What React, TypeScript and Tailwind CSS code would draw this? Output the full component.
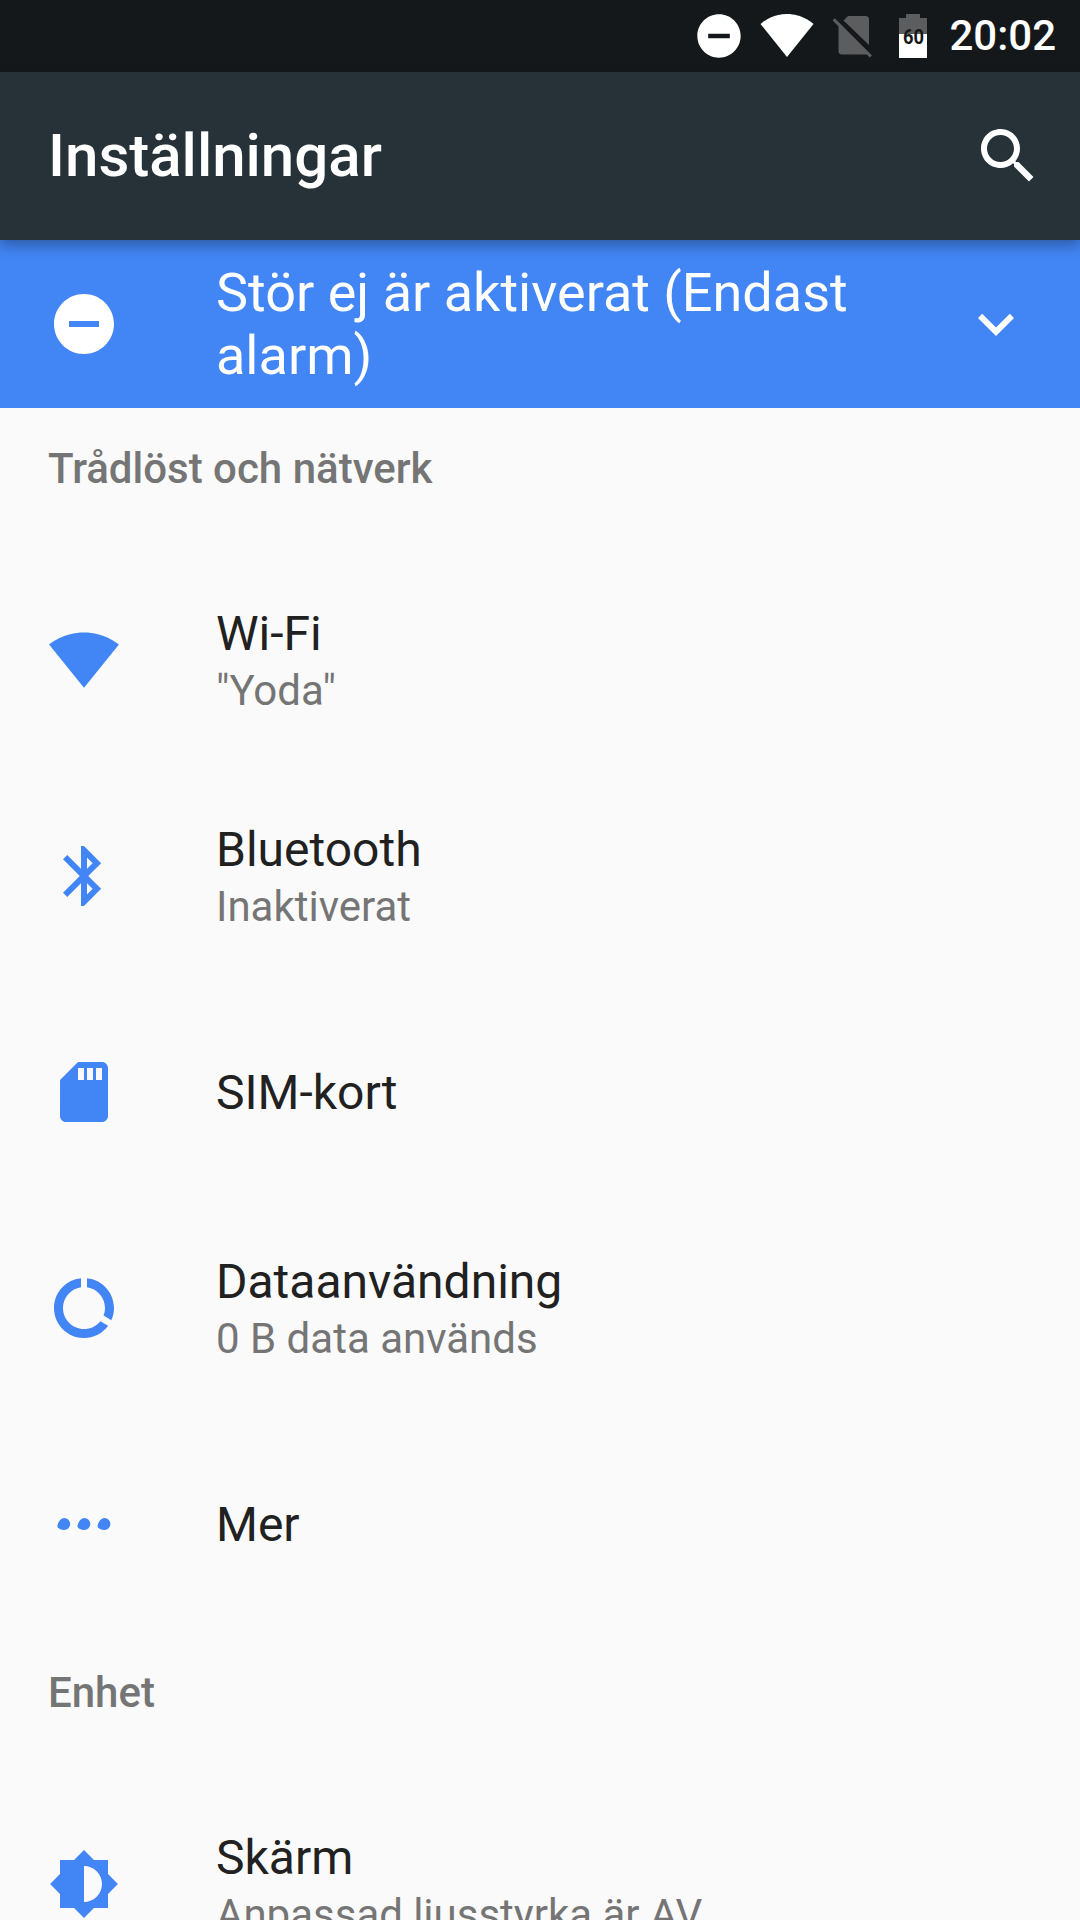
import type { ReactNode } from "react";

interface IconProps {
  className?: string;
  children: ReactNode;
}

function Icon({ className = "text-[#4285f4]", children }: IconProps) {
  return (
    <svg viewBox="0 0 24 24" className={`h-[72px] w-[72px] shrink-0 ${className}`} fill="currentColor">
      {children}
    </svg>
  );
}

const icons = {
  dnd: <path d="M12 2C6.48 2 2 6.48 2 12s4.48 10 10 10 10-4.48 10-10S17.52 2 12 2zm5 11H7v-2h10v2z" />,
  wifi: <path d="M12.01 21.29L23.64 6.8c-.45-.34-4.93-4-11.64-4C5.28 2.8.81 6.46.36 6.8l11.63 14.49.01.01z" />,
  bluetooth: (
    <path d="M17.71 7.71L12 2h-1v7.59L6.41 5 5 6.41 10.59 12 5 17.59 6.41 19 11 14.41V22h1l5.71-5.71-4.3-4.29 4.3-4.29zM13 5.83l1.88 1.88L13 9.59V5.83zm1.88 10.46L13 18.17v-3.76l1.88 1.88z" />
  ),
  sim: (
    <path d="M18 2h-8L4.02 8 4 20c0 1.1.9 2 2 2h12c1.1 0 2-.9 2-2V4c0-1.1-.9-2-2-2zm-6 6h-2V4h2v4zm3 0h-2V4h2v4zm3 0h-2V4h2v4z" />
  ),
  data: (
    <path d="M13 2.05v3.03c3.39.49 6 3.39 6 6.92 0 .9-.18 1.75-.48 2.54l2.6 1.53c.56-1.24.88-2.62.88-4.07 0-5.18-3.95-9.45-9-9.95zM12 19c-3.87 0-7-3.13-7-7 0-3.53 2.61-6.43 6-6.92V2.05c-5.06.5-9 4.76-9 9.95 0 5.52 4.47 10 9.99 10 3.31 0 6.24-1.61 8.06-4.09l-2.6-1.53C16.17 17.98 14.21 19 12 19z" />
  ),
  more: (
    <path d="M3.1 12.9c.2-1.5 1.1-2.9 2.3-2.9a2 2 0 1 1 0 4c-1.1 0-2-.5-2.3-1.1zm6.7 0c.2-1.5 1.1-2.9 2.3-2.9a2 2 0 1 1 0 4c-1.1 0-2-.5-2.3-1.1zm6.7 0c.2-1.5 1.1-2.9 2.3-2.9a2 2 0 1 1 0 4c-1.1 0-2-.5-2.3-1.1z" />
  ),
  display: (
    <path d="M20 15.31L23.31 12 20 8.69V4h-4.69L12 .69 8.69 4H4v4.69L.69 12 4 15.31V20h4.69L12 23.31 15.31 20H20v-4.69zM12 18V6c3.31 0 6 2.69 6 6s-2.69 6-6 6z" />
  ),
};

interface Setting {
  title: string;
  summary?: string;
  icon: ReactNode;
}

const network: Setting[] = [
  { title: "Wi-Fi", summary: '"Yoda"', icon: icons.wifi },
  { title: "Bluetooth", summary: "Inaktiverat", icon: icons.bluetooth },
  { title: "SIM-kort", icon: icons.sim },
  { title: "Dataanvändning", summary: "0 B data används", icon: icons.data },
  { title: "Mer", icon: icons.more },
];

const device: Setting[] = [
  { title: "Skärm", summary: "Anpassad ljusstyrka är AV", icon: icons.display },
];

function StatusBar() {
  return (
    <div className="flex h-[72px] items-center justify-end bg-[#14181b] pr-6 text-white">
      <svg viewBox="0 0 24 24" className="h-[52px] w-[52px]" fill="currentColor">
        {icons.dnd}
      </svg>
      <svg viewBox="0 0 54 44" className="ml-[15px] h-[44px] w-[54px]" fill="currentColor">
        <path d="M27 43L53.5 10C52.5 9 42.5 0 27 0S1.500 9 .5 10z" />
      </svg>
      <svg viewBox="0 0 40 44" className="ml-[18px] h-[44px] w-[40px]" fill="#5b5d5f">
        <path d="M16 2h17.500a3.500 3.500 0 0 1 3.500 3.500V31L11.500 6.500z" />
        <path d="M7 12L35.500 40.500H10A3.500 3.500 0 0 1 6.500 37V12z" />
        <path d="M2.800 4.200L40 41.400l-2.200 2.200L.6 6.400z" />
      </svg>
      <svg viewBox="0 0 28 44" className="ml-[27px] h-[44px] w-[28px]">
        <path d="M0 20V4h7V0h14v4h7v16z" fill="#5b5d5f" />
        <path d="M0 20h28v24H0z" fill="#fff" />
        <text x="4" y="30" textLength="21" lengthAdjust="spacingAndGlyphs" className="font-['Roboto'] text-[21px] font-bold" fill="#14181b">
          60
        </text>
      </svg>
      <span className="ml-[22px] text-[42px] leading-none font-medium">20:02</span>
    </div>
  );
}

function SettingRow({ title, summary, icon }: Setting) {
  return (
    <div className="flex h-[216px] items-center pl-12">
      <Icon>{icon}</Icon>
      <div className="ml-24 whitespace-nowrap">
        <p className="text-[48px] leading-[57px] text-[#212121]">{title}</p>
        {summary && <p className="mt-1 text-[42px] leading-[50px] text-[#757575]">{summary}</p>}
      </div>
    </div>
  );
}

function Category({ title, items }: { title: string; items: Setting[] }) {
  return (
    <section>
      <h2 className="h-[144px] pt-9 pl-12 text-[42px] leading-[50px] font-medium text-[#757575]">{title}</h2>
      {items.map((item) => (
        <SettingRow key={item.title} {...item} />
      ))}
    </section>
  );
}

export default function App() {
  return (
    <div className="h-[1920px] w-[1080px] overflow-hidden bg-[#fafafa] font-['Roboto',sans-serif]">
      <StatusBar />
      <header className="relative z-10 flex h-[168px] items-center justify-between bg-[#263238] pr-9 pl-12 text-white shadow-[0_6px_12px_rgba(0,0,0,0.3)]">
        <h1 className="text-[60px] leading-[70px] font-medium">Inställningar</h1>
        <Icon className="text-white">
          <path d="M15.500 14h-.79l-.28-.27C15.410 12.590 16 11.110 16 9.500 16 5.910 13.090 3 9.500 3S3 5.910 3 9.500 5.910 16 9.500 16c1.610 0 3.090-.59 4.230-1.570l.27.28v.79l5 4.990L20.490 19l-4.990-5zm-6 0C7.010 14 5 11.990 5 9.500S7.010 5 9.500 5 14 7.010 14 9.500 11.990 14 9.500 14z" />
        </Icon>
      </header>
      <div className="flex h-[168px] items-center bg-[#4285f4] pr-12 pl-12 text-white">
        <Icon className="text-white">{icons.dnd}</Icon>
        <p className="ml-24 w-[696px] text-[54px] leading-[63px]">Stör ej är aktiverat (Endast alarm)</p>
        <Icon className="ml-auto text-white">
          <path d="M16.590 8.590L12 13.170 7.410 8.590 6 10l6 6 6-6z" />
        </Icon>
      </div>
      <Category title="Trådlöst och nätverk" items={network} />
      <Category title="Enhet" items={device} />
    </div>
  );
}
